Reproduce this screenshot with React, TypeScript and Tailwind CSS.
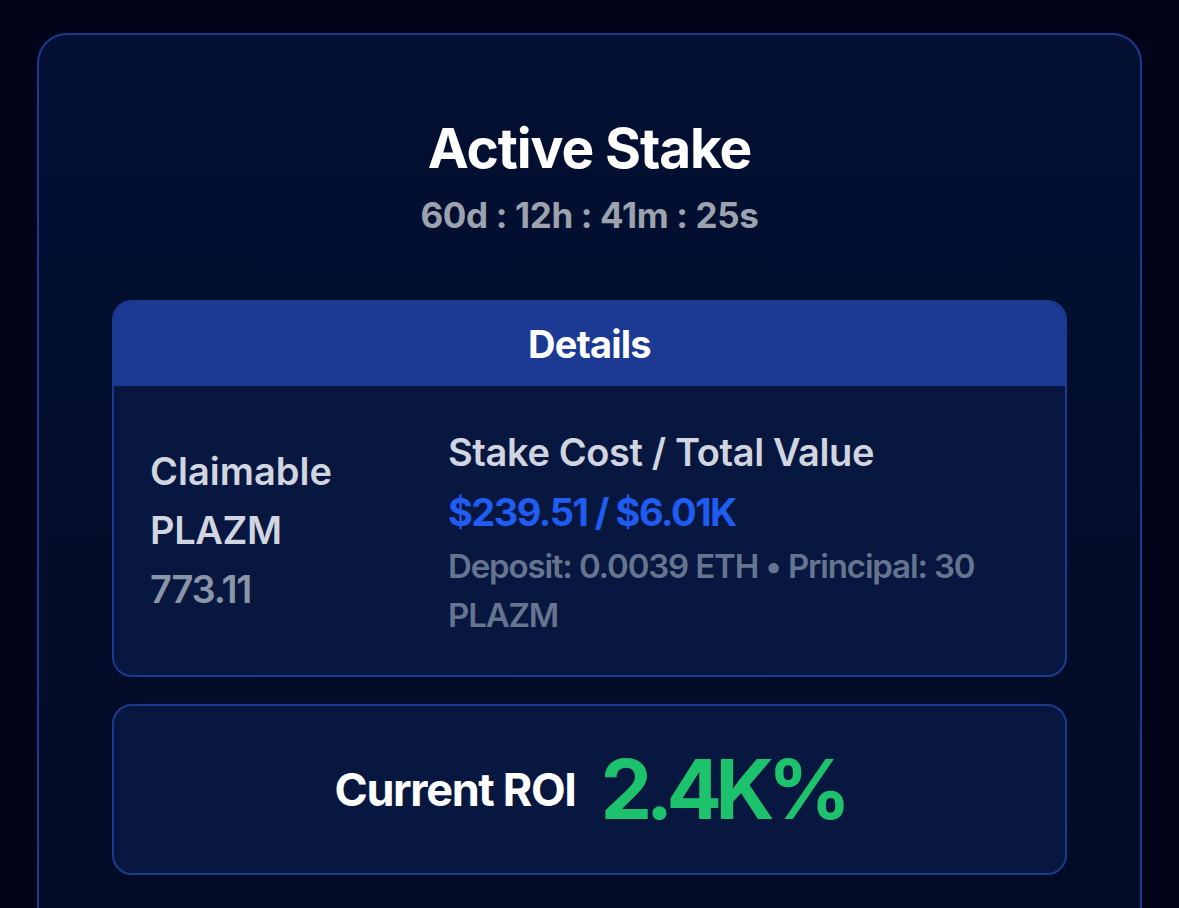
import React from "react";

export default function App() {
  return (
    <div
      className="min-h-screen w-full overflow-hidden bg-[#010419] pt-[33px] pl-[37px] pr-[37px]"
      style={{ fontFamily: "Inter, 'Noto Sans', sans-serif" }}
    >
      <div className="h-[920px] rounded-[30px] border-2 border-[#1a3b8e] bg-gradient-to-b from-[#031033] to-[#020b24] px-[73px] pt-[80px]">
        <div className="flex flex-col items-center">
          <h1 className="text-[55px] font-bold leading-[66px] tracking-[-0.02em] text-white">
            Active Stake
          </h1>
          <div className="mt-[12px] text-[35px] font-bold leading-[44px] tracking-[-0.01em] text-[#9ca3af]">
            60d : 12h : 41m : 25s
          </div>
        </div>

        <div className="mt-[63px] overflow-hidden rounded-[20px] border-2 border-[#1a3b8e] bg-[#08173f]">
          <div className="flex h-[84px] items-center justify-center bg-[#1c3a93]">
            <span className="text-[38px] font-bold tracking-[-0.02em] text-white">
              Details
            </span>
          </div>
          <div className="grid h-[289px] grid-cols-[266px_1fr] items-center gap-8 px-[36px]">
            <div className="flex flex-col">
              <span className="text-[38px] font-semibold leading-[59px] tracking-[0em] text-[#d1d5e0]">
                Claimable
              </span>
              <span className="text-[38px] font-semibold leading-[59px] tracking-[-0.01em] text-[#d1d5e0]">
                PLAZM
              </span>
              <span className="text-[38px] font-semibold leading-[59px] tracking-[-0.03em] text-[#8b95a8]">
                773.11
              </span>
            </div>
            <div className="flex flex-col">
              <span className="text-[38px] font-semibold leading-[60px] tracking-[-0.01em] text-[#d1d5e0]">
                Stake Cost / Total Value
              </span>
              <span className="text-[38px] font-bold leading-[60px] tracking-[-0.04em] text-[#1f5cf2]">
                $239.51 / $6.01K
              </span>
              <span className="text-[33px] font-semibold leading-[49px] tracking-[-0.035em] text-[#66758f]">
                Deposit: 0.0039 ETH • Principal: 30 PLAZM
              </span>
            </div>
          </div>
        </div>

        <div className="mt-[27px] flex h-[171px] items-center justify-center gap-[25px] rounded-[20px] border-2 border-[#1a3b8e] bg-[#08173f]">
          <span className="text-[45px] font-bold tracking-[-0.03em] text-white">
            Current ROI
          </span>
          <span className="text-[82px] font-bold leading-none tracking-[-0.08em] text-[#1dc36c]">
            2.4K%
          </span>
        </div>
      </div>
    </div>
  );
}
